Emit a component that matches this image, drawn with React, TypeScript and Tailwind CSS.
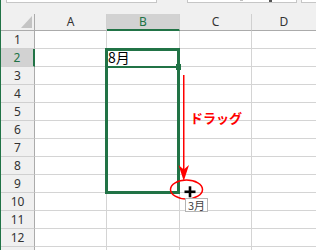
const rows = [1, 2, 3, 4, 5, 6, 7, 8, 9, 10, 11, 12, 13];

function HeaderCell({ label, w, active }: { label: string; w: string; active?: boolean }) {
  return (
    <div
      className={`${w} h-full flex items-center justify-center border-r border-[#d0d0d0] ${
        active ? "bg-[#d2d2d2] text-[#217346] border-b-2 border-b-[#217346]" : "border-b border-b-[#ababab] text-[#333]"
      }`}
    >
      {label}
    </div>
  );
}

function Row({ n }: { n: number }) {
  const active = n === 2;
  return (
    <div className="flex h-[18px] shrink-0">
      <div
        className={`w-[34px] h-full flex items-center justify-center border-b border-b-[#d0d0d0] ${
          active
            ? "bg-[#d2d2d2] text-[#217346] border-r-2 border-r-[#217346]"
            : "bg-[#f0f0f0] text-[#333] border-r border-r-[#ababab]"
        }`}
      >
        {/* row 13 is only partly visible, its number falls below the edge */}
        {n < 13 ? n : ""}
      </div>
      <div className="w-[72px] border-r border-b border-[#d4d4d4]" />
      <div className="w-[73px] border-r border-b border-[#d4d4d4] flex items-center pl-[1px] text-[14px] text-black font-['Noto_Sans_CJK_JP',sans-serif]">
        {active ? "8月" : ""}
      </div>
      <div className="w-[72px] border-r border-b border-[#d4d4d4]" />
      <div className="flex-1 border-b border-[#d4d4d4]" />
    </div>
  );
}

export default function App() {
  return (
    <div className="relative w-[316px] h-[250px] overflow-hidden bg-white flex font-['Noto_Sans',sans-serif] text-[12px]">
      <div className="w-px h-full bg-[#217346] shrink-0" />
      <div className="flex-1 flex flex-col">
        {/* formula bar remains */}
        <div className="h-[14px] shrink-0 bg-[#f0f0f0] flex items-start">
          <div className="ml-[5px] w-[151px] h-[3px] bg-white border border-t-0 border-[#c6c6c6]" />
          <div className="relative ml-[30px] w-[110px] h-[3px] bg-white border border-t-0 border-[#c6c6c6]">
            <span className="absolute left-[52px] top-0 w-[3px] h-[1px] bg-[#c0c0c0]" />
            <span className="absolute left-[81px] top-0 w-[3px] h-[2px] bg-[#555]" />
          </div>
          <div className="ml-[4px] flex-1 h-[3px] bg-white border border-t-0 border-r-0 border-[#c6c6c6]" />
        </div>

        {/* column headers */}
        <div className="h-[17px] shrink-0 flex bg-[#f0f0f0]">
          <div className="relative w-[34px] h-full border-r border-b border-[#ababab]">
            <svg className="absolute left-[20px] top-[2px]" width="11" height="12" viewBox="0 0 11 12">
              <polygon points="11,0 11,12 0,12" fill="#c4c4c4" />
            </svg>
          </div>
          <HeaderCell label="A" w="w-[72px]" />
          <HeaderCell label="B" w="w-[73px]" active />
          <HeaderCell label="C" w="w-[72px]" />
          <div className="flex-1 h-full flex items-center justify-center border-b border-b-[#ababab] text-[#333]">D</div>
        </div>

        {rows.map((n) => (
          <Row key={n} n={n} />
        ))}
      </div>

      {/* selection range */}
      <div className="absolute left-[105px] top-[48px] w-[75px] h-[146px] border-[3px] border-[#217346]" />
      <div className="absolute left-[107px] top-[66px] w-[69px] h-[2px] bg-[#217346]" />
      <div className="absolute left-[176px] top-[64px] w-[5px] h-[6px] bg-[#217346]" />

      {/* annotation */}
      <svg className="absolute left-0 top-0 pointer-events-none" width="316" height="250" viewBox="0 0 316 250">
        <line x1="183.75" y1="75" x2="183.75" y2="172" stroke="#ff0000" strokeWidth="1.5" />
        <path d="M183.75 181 L178.5 165 L183.75 169.5 L189 165 Z" fill="#ff0000" />
        <ellipse cx="186.5" cy="189.5" rx="16" ry="9.5" fill="none" stroke="#ff0000" strokeWidth="1.5" />
        <rect x="184.5" y="190.5" width="11" height="2.6" fill="#000" />
        <rect x="188.7" y="186.3" width="2.6" height="11" fill="#000" />
      </svg>
      <div className="absolute left-[190px] top-[111px] text-[13px] font-bold text-[#ff0000] leading-none font-['Noto_Sans_CJK_JP',sans-serif]">
        ドラッグ
      </div>
      <div className="absolute left-[185px] top-[198px] h-[14px] px-[2px] flex items-center bg-white border border-[#b4b4b4] text-[11px] text-[#444] leading-none font-['Noto_Sans_CJK_JP',sans-serif]">
        3月
      </div>
    </div>
  );
}
